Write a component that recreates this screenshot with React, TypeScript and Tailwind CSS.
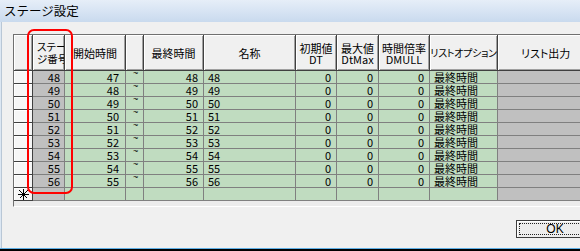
import React from "react";

const rows = [48, 49, 50, 51, 52, 53, 54, 55, 56];

function Star() {
  return (
    <svg width="11" height="11" viewBox="0 0 11 11" className="block">
      <g stroke="#000" strokeWidth="1" shapeRendering="crispEdges">
        <line x1="5.5" y1="0" x2="5.5" y2="11" />
        <line x1="0" y1="5.5" x2="11" y2="5.5" />
        <line x1="1.5" y1="1.5" x2="9.5" y2="9.5" />
        <line x1="9.5" y1="1.5" x2="1.5" y2="9.5" />
      </g>
    </svg>
  );
}

function DataRow({ n }: { n: number }) {
  return (
    <div className="flex h-[13px] text-[11px] leading-[12px] text-black">
      <div className="w-[19px] shrink-0 h-full bg-[#f6f6f6] border-r border-b border-[#404040] shadow-[inset_1px_1px_0_#ffffff]" />
      <div className="w-[32px] shrink-0 h-full bg-[#c0c0c0] border-r border-b border-[#808080] text-right pr-[4px]">{n}</div>
      <div className="w-[61px] shrink-0 h-full bg-[#c0dcc0] border-r border-b border-[#808080] text-right pr-[6px]">{n - 1}</div>
      <div className="w-[18px] shrink-0 h-full bg-[#c0dcc0] border-r border-b border-[#808080] relative overflow-hidden">
        <span className="absolute left-[7px] top-[-4px] text-[9px] leading-[12px] font-['Liberation_Sans',sans-serif]">~</span>
      </div>
      <div className="w-[60px] shrink-0 h-full bg-[#c0dcc0] border-r border-b border-[#808080] text-right pr-[5px]">{n}</div>
      <div className="w-[92px] shrink-0 h-full bg-[#c0dcc0] border-r border-b border-[#808080] text-left pl-[4px]">{n}</div>
      <div className="w-[41px] shrink-0 h-full bg-[#c0dcc0] border-r border-b border-[#808080] text-right pr-[5px]">0</div>
      <div className="w-[42px] shrink-0 h-full bg-[#c0dcc0] border-r border-b border-[#808080] text-right pr-[5px]">0</div>
      <div className="w-[51px] shrink-0 h-full bg-[#c0dcc0] border-r border-b border-[#808080] text-right pr-[5px]">0</div>
      <div className="w-[68px] shrink-0 h-full bg-[#c0dcc0] border-r border-b border-[#808080] text-left pl-[4px]">最終時間</div>
      <div className="w-[130px] shrink-0 h-full bg-[#c0c0c0] border-b border-[#808080]" />
    </div>
  );
}

function NewRow() {
  return (
    <div className="flex h-[13px] text-[11px] leading-[12px] text-black">
      <div className="w-[19px] shrink-0 h-full bg-[#f6f6f6] border-r border-b border-[#404040] shadow-[inset_1px_1px_0_#ffffff] flex items-center justify-center">
        <Star />
      </div>
      <div className="w-[32px] shrink-0 h-full bg-[#c0c0c0] border-r border-b border-[#808080]" />
      <div className="w-[61px] shrink-0 h-full bg-[#c0dcc0] border-r border-b border-[#808080]" />
      <div className="w-[18px] shrink-0 h-full bg-[#c0dcc0] border-r border-b border-[#808080]" />
      <div className="w-[60px] shrink-0 h-full bg-[#c0dcc0] border-r border-b border-[#808080]" />
      <div className="w-[92px] shrink-0 h-full bg-[#c0dcc0] border-r border-b border-[#808080]" />
      <div className="w-[41px] shrink-0 h-full bg-[#c0dcc0] border-r border-b border-[#808080]" />
      <div className="w-[42px] shrink-0 h-full bg-[#c0dcc0] border-r border-b border-[#808080]" />
      <div className="w-[51px] shrink-0 h-full bg-[#c0dcc0] border-r border-b border-[#808080]" />
      <div className="w-[68px] shrink-0 h-full bg-[#c0dcc0] border-r border-b border-[#808080]" />
      <div className="w-[130px] shrink-0 h-full bg-[#c0c0c0] border-b border-[#808080]" />
    </div>
  );
}

export default function App() {
  return (
    <div className="relative w-[580px] h-[251px] overflow-hidden bg-[#f0f0f0] flex flex-col font-['Noto_Sans_CJK_JP',sans-serif] text-black">
      {/* title bar */}
      <div className="h-[22px] shrink-0 bg-gradient-to-b from-[#e6eef8] to-[#c9daee] flex items-center pl-[4px]">
        <span className="text-[12.5px] leading-[14px] text-black">ステージ設定</span>
      </div>

      {/* body */}
      <div className="flex-1 flex min-h-0">
        <div className="w-[2px] shrink-0 bg-[#dce7f3] border-r border-[#b9c7d6]" />
        <div className="flex-1 flex flex-col min-w-0">
          {/* grid */}
          <div className="ml-[11px] mt-[12px] w-[700px] border-l border-t border-[#707070] border-b border-b-white flex flex-col">
            {/* header */}
            <div className="flex h-[36px] text-[11px] leading-[12px] [font-feature-settings:'palt']">
              <div className="w-[19px] shrink-0 h-full bg-[#f0f0f0] border-r border-b border-[#404040] shadow-[inset_1px_1px_0_#ffffff,inset_-1px_-1px_0_#a0a0a0]" />
              <div className="w-[32px] shrink-0 h-full bg-[#f0f0f0] border-r border-b border-[#404040] shadow-[inset_1px_1px_0_#ffffff,inset_-1px_-1px_0_#a0a0a0] flex flex-col justify-center pl-[4px] overflow-hidden whitespace-nowrap text-[10.5px]">
                <span className="leading-[12px]">ステー</span>
                <span className="leading-[12px]">ジ番号</span>
              </div>
              <div className="w-[61px] shrink-0 h-full bg-[#f0f0f0] border-r border-b border-[#404040] shadow-[inset_1px_1px_0_#ffffff,inset_-1px_-1px_0_#a0a0a0] flex items-center justify-center whitespace-nowrap">開始時間</div>
              <div className="w-[18px] shrink-0 h-full bg-[#f0f0f0] border-r border-b border-[#404040] shadow-[inset_1px_1px_0_#ffffff,inset_-1px_-1px_0_#a0a0a0]" />
              <div className="w-[60px] shrink-0 h-full bg-[#f0f0f0] border-r border-b border-[#404040] shadow-[inset_1px_1px_0_#ffffff,inset_-1px_-1px_0_#a0a0a0] flex items-center justify-center whitespace-nowrap">最終時間</div>
              <div className="w-[92px] shrink-0 h-full bg-[#f0f0f0] border-r border-b border-[#404040] shadow-[inset_1px_1px_0_#ffffff,inset_-1px_-1px_0_#a0a0a0] flex items-center justify-center whitespace-nowrap">名称</div>
              <div className="w-[41px] shrink-0 h-full bg-[#f0f0f0] border-r border-b border-[#404040] shadow-[inset_1px_1px_0_#ffffff,inset_-1px_-1px_0_#a0a0a0] flex flex-col items-center justify-center whitespace-nowrap pt-[1px]">
                <span className="leading-[12px]">初期値</span>
                <span className="leading-[11px]">DT</span>
              </div>
              <div className="w-[42px] shrink-0 h-full bg-[#f0f0f0] border-r border-b border-[#404040] shadow-[inset_1px_1px_0_#ffffff,inset_-1px_-1px_0_#a0a0a0] flex flex-col items-center justify-center whitespace-nowrap pt-[1px]">
                <span className="leading-[12px]">最大値</span>
                <span className="leading-[11px]">DtMax</span>
              </div>
              <div className="w-[51px] shrink-0 h-full bg-[#f0f0f0] border-r border-b border-[#404040] shadow-[inset_1px_1px_0_#ffffff,inset_-1px_-1px_0_#a0a0a0] flex flex-col items-center justify-center whitespace-nowrap pt-[1px]">
                <span className="leading-[12px]">時間倍率</span>
                <span className="leading-[11px]">DMULL</span>
              </div>
              <div className="w-[68px] shrink-0 h-full bg-[#f0f0f0] border-r border-b border-[#404040] shadow-[inset_1px_1px_0_#ffffff,inset_-1px_-1px_0_#a0a0a0] flex items-center justify-center whitespace-nowrap overflow-hidden text-[10px] tracking-[-0.3px]">リストオプション</div>
              <div className="w-[130px] shrink-0 h-full bg-[#f0f0f0] border-r border-b border-[#404040] shadow-[inset_1px_1px_0_#ffffff,inset_-1px_-1px_0_#a0a0a0] flex items-center justify-start pl-[23px] whitespace-nowrap">リスト出力</div>
            </div>
            {rows.map((n) => (
              <DataRow key={n} n={n} />
            ))}
            <NewRow />
            <div className="h-[5px] bg-[#ececec]" />
          </div>

          {/* buttons */}
          <div className="flex justify-end mt-[13px] mr-[-14px]">
            <div className="w-[78px] h-[18px] border border-[#3c3c3c] bg-[#ededed] shadow-[inset_1px_1px_0_#ffffff] p-[2px]">
              <div className="w-full h-full border border-dotted border-[#222] flex items-center justify-center text-[12px] leading-[12px] font-['Liberation_Sans',sans-serif]">OK</div>
            </div>
          </div>
        </div>
      </div>

      {/* bottom edge */}
      <div className="h-[1px] shrink-0 bg-[#5fb0e6]" />
      <div className="h-[2px] shrink-0 bg-black" />

      {/* red annotation */}
      <div className="absolute left-[27px] top-[29px] w-[46px] h-[165px] border-2 border-[#ff0000] rounded-[7px] pointer-events-none" />
    </div>
  );
}
